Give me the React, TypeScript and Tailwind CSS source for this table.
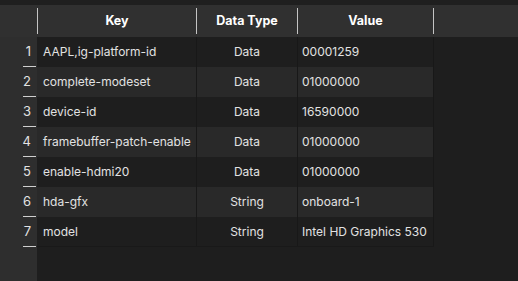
const rows = [
  { key: "AAPL,ig-platform-id", type: "Data", value: "00001259" },
  { key: "complete-modeset", type: "Data", value: "01000000" },
  { key: "device-id", type: "Data", value: "16590000" },
  { key: "framebuffer-patch-enable", type: "Data", value: "01000000" },
  { key: "enable-hdmi20", type: "Data", value: "01000000" },
  { key: "hda-gfx", type: "String", value: "onboard-1" },
  { key: "model", type: "String", value: "Intel HD Graphics 530" },
];

function HeaderLine() {
  return <div className="w-px h-[26px] bg-[#c4c4c4] shrink-0" />;
}

export default function App() {
  return (
    <div
      className="w-[518px] h-[281px] bg-[#1e1e1e] flex flex-col text-[12px] text-[#e2e2e2] overflow-hidden"
      style={{ fontFamily: "Inter, 'Liberation Sans', sans-serif" }}
    >
      <div className="h-[5px] bg-[#1f1f1f] shrink-0" />
      <div className="flex flex-1">
        {/* gutter */}
        <div className="w-[37px] bg-[#2e2e2e] flex flex-col shrink-0">
          <div className="h-[32px] bg-[#303030]" />
          {rows.map((_, i) => (
            <div key={i} className="h-[30px] relative flex items-center justify-end pr-[6px] text-[13px]">
              <span>{i + 1}</span>
              <div className="absolute bottom-0 left-[23px] w-[13px] h-px bg-[#cfcfcf]" />
            </div>
          ))}
        </div>
        {/* table */}
        <div className="flex-1 flex flex-col">
          <div className="h-[32px] bg-[#303030] flex items-center font-bold text-white text-[12.5px]">
            <HeaderLine />
            <div className="w-[158px] text-center">Key</div>
            <HeaderLine />
            <div className="w-[100px] text-center">Data Type</div>
            <HeaderLine />
            <div className="w-[135px] text-center">Value</div>
            <HeaderLine />
          </div>
          {rows.map((r, i) => (
            <div
              key={i}
              className={`h-[30px] w-[397px] flex items-center ${
                i % 2 === 0 ? "bg-[#1e1e1e]" : "bg-[#292929]"
              } ${i === rows.length - 1 ? "border-b border-[#191919]" : ""}`}
            >
              <div className="w-[159px] h-full flex items-center pl-[6px] whitespace-nowrap">{r.key}</div>
              <div className="w-px h-full bg-[#181818]" />
              <div className="w-[100px] h-full flex items-center justify-center">{r.type}</div>
              <div className="w-px h-full bg-[#181818]" />
              <div className="w-[135px] h-full flex items-center pl-[4px] whitespace-nowrap">{r.value}</div>
              <div className="w-px h-full bg-[#181818]" />
            </div>
          ))}
        </div>
      </div>
    </div>
  );
}
